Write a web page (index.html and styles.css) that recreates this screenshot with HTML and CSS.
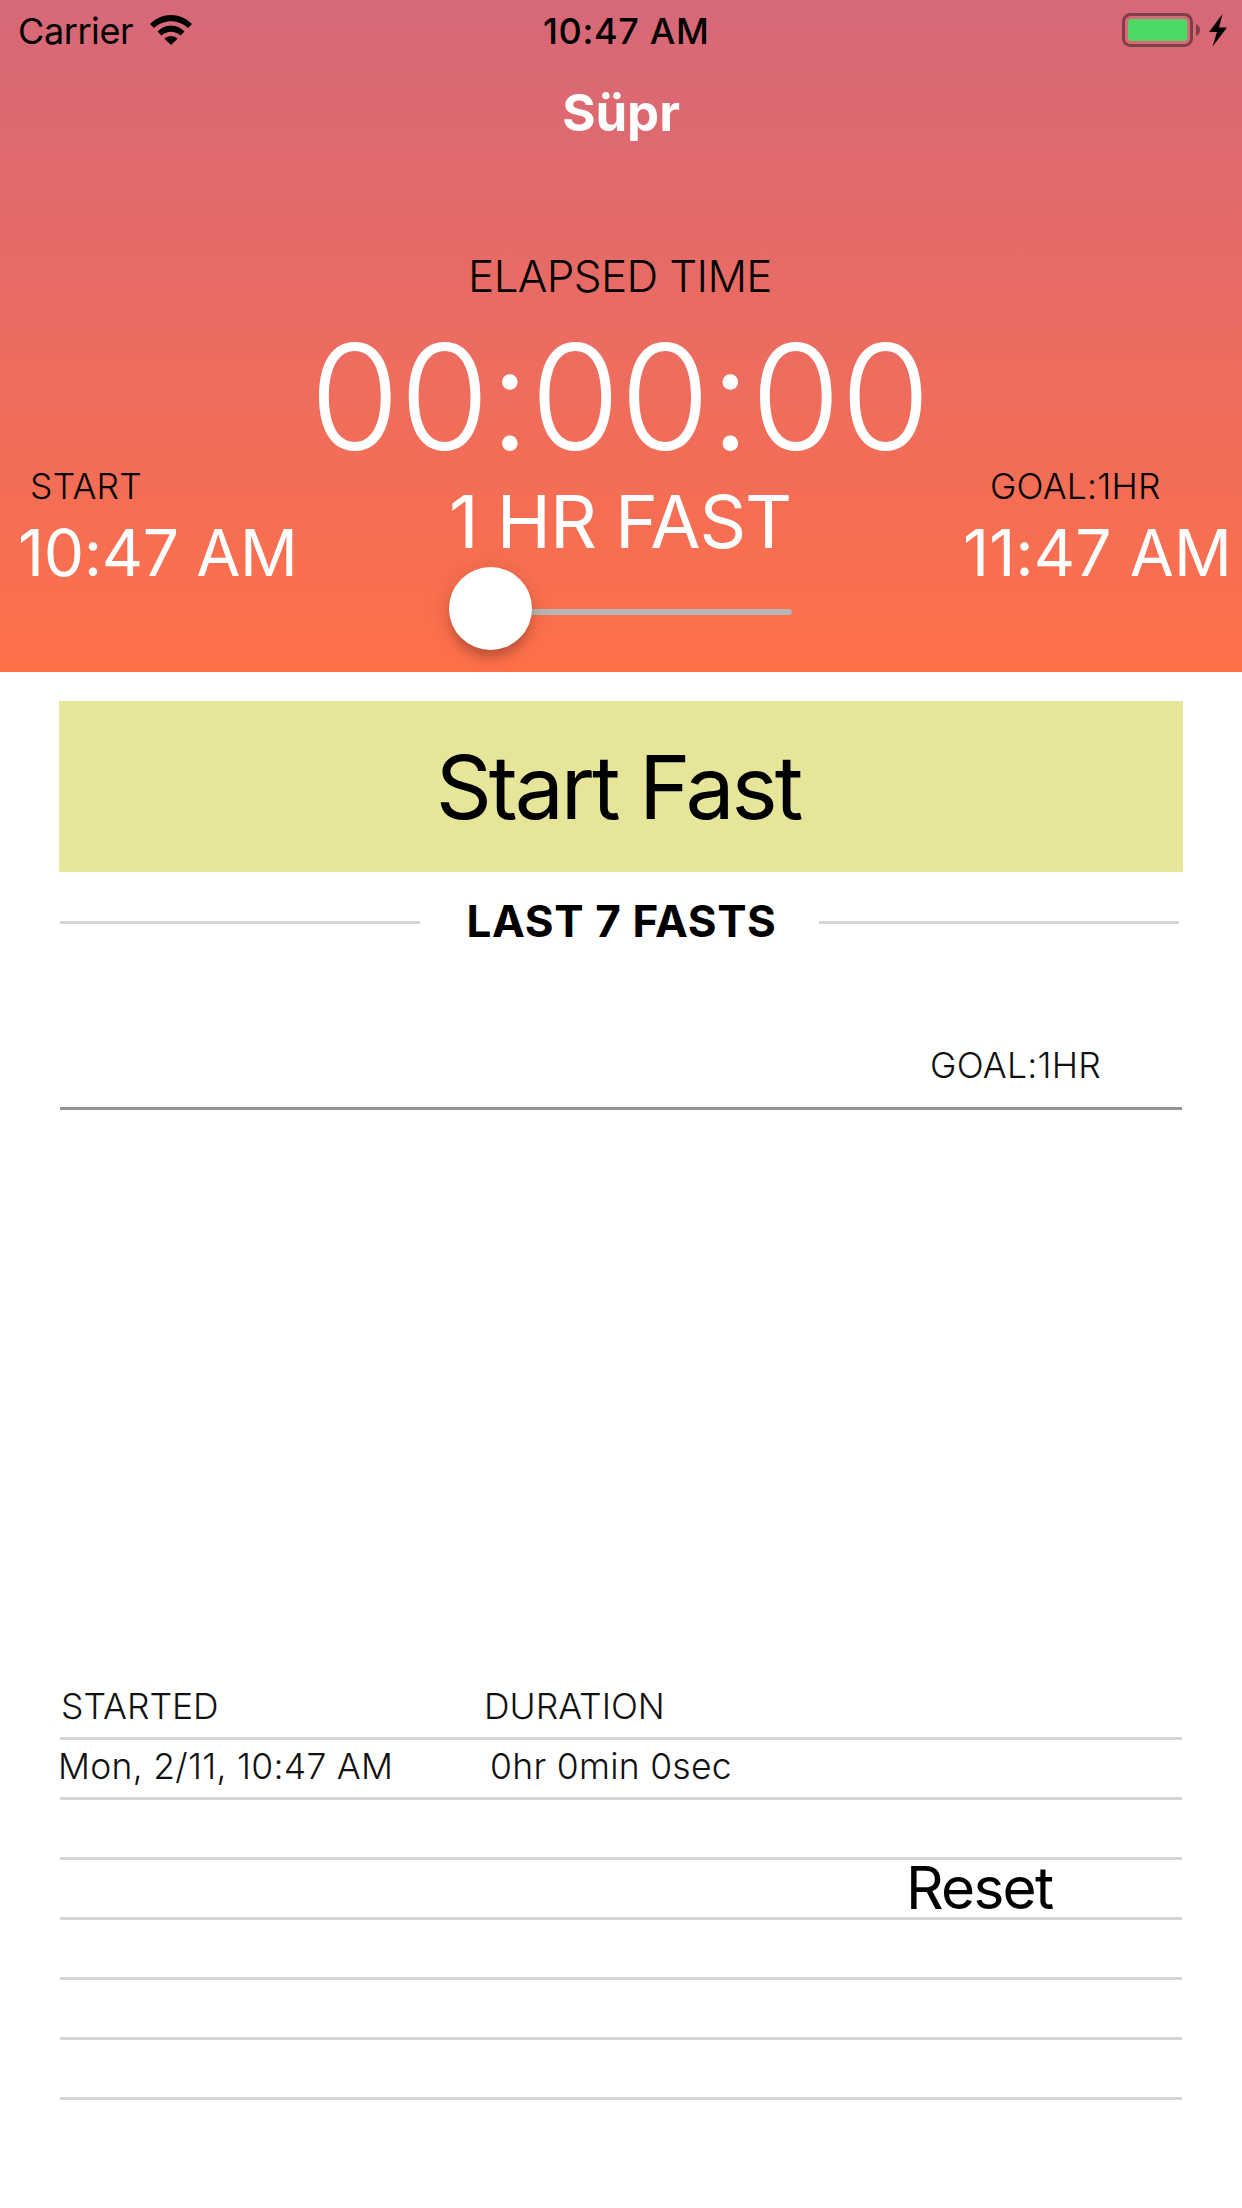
FILE: index.html
```html
<!DOCTYPE html>
<html lang="en">
<head>
<meta charset="utf-8">
<title>Süpr</title>
<link rel="stylesheet" href="styles.css">
</head>
<body>
<header class="header">
  <div class="status">
    <div class="status-left">
      <span class="carrier">Carrier</span>
      <svg class="wifi" width="42" height="30" viewBox="0 0 42 30">
        <path d="M0 9C12-3 30-3 42 9L38 13C28.500 4 13.500 4 4 13Z"/>
        <path d="M7.500 16.500C15 8.500 27 8.500 34.500 16.500L30.500 20.500C25 15.500 17 15.500 11.500 20.500Z"/>
        <path d="M14.500 23.700C18 20 24 20 27.500 23.700L21 30Z"/>
      </svg>
    </div>
    <span class="clock">10:47 AM</span>
    <svg class="battery" width="106" height="34" viewBox="0 0 106 34">
      <rect x="1.500" y="1.500" width="68" height="31" rx="7" fill="none" stroke="#803e49" stroke-width="3"/>
      <rect x="6" y="6" width="59.300" height="22" rx="3.500" fill="#4cd964"/>
      <path d="M74 11C79.300 12.500 79.300 21.500 74 23Z" fill="#803e49"/>
      <path d="M100.500 1L87 19H95L90.500 33.500L105 14.500H97Z"/>
    </svg>
  </div>
  <h1 class="title">Süpr</h1>
  <div class="hero">
    <div class="side side-start">
      <span class="label">START</span>
      <span class="time">10:47 AM</span>
    </div>
    <div class="center">
      <span class="elapsed">ELAPSED TIME</span>
      <span class="timer">00:00:00</span>
      <span class="length">1 HR FAST</span>
      <div class="slider"><div class="track"></div><div class="thumb"></div></div>
    </div>
    <div class="side side-goal">
      <span class="label">GOAL:1HR</span>
      <span class="time time-goal">11:47 AM</span>
    </div>
  </div>
</header>
<main>
  <button class="start-button">Start Fast</button>
  <div class="section-head"><h2>LAST 7 FASTS</h2></div>
  <div class="chart">
    <div class="goal-line">GOAL:1HR</div>
  </div>
  <div class="log">
    <div class="row head"><span>STARTED</span><span>DURATION</span></div>
    <div class="row entry"><span>Mon, 2/11, 10:47 AM</span><span>0hr 0min 0sec</span></div>
    <div class="row"></div>
    <div class="row"><button class="reset">Reset</button></div>
    <div class="row"></div>
    <div class="row"></div>
    <div class="row"></div>
  </div>
</main>
</body>
</html>
```
FILE: styles.css
```css
* { box-sizing: border-box; }
body {
  margin: 0;
  min-height: 2208px;
  background: #fff;
  color: #000;
  font-family: Inter, "Liberation Sans", sans-serif;
  white-space: nowrap;
}
h1, h2 { margin: 0; }
svg { display: block; }
button {
  border: 0;
  margin: 0;
  padding: 0;
  background: none;
  color: #000;
  font-family: inherit;
}

.header {
  height: 672px;
  color: #fff;
  background: linear-gradient(#d66879, #ff7048);
}
.status {
  display: grid;
  grid-template-columns: 543px 1fr auto;
  height: 62px;
  padding-right: 14px;
  color: #000;
  font-size: 36px;
  line-height: 62px;
}
.status-left { display: flex; gap: 17px; padding-left: 18px; }
.carrier { letter-spacing: -0.41px; }
.wifi { margin-top: 15px; }
.clock { font-weight: 500; letter-spacing: 0.66px; }
.battery { margin-top: 13px; }
.title {
  font-size: 51px;
  font-weight: 700;
  line-height: 101px;
  text-align: center;
  letter-spacing: -0.1px;
}

.hero { display: grid; grid-template-columns: 309px 624px 309px; }
.side { display: flex; flex-direction: column; padding-top: 302px; }
.side-start { padding-left: 18px; }
.side-goal { padding-left: 30px; }
.label {
  color: #000;
  font-size: 35.5px;
  font-weight: 300;
  line-height: 44px;
  letter-spacing: 0.2px;
}
.side-start .label { padding-left: 12px; }
.side-goal .label { padding-left: 27px; }
.time { font-size: 64px; line-height: 88px; letter-spacing: -0.37px; }
.time-goal { letter-spacing: 0.11px; }

.center { display: flex; flex-direction: column; padding-top: 80px; text-align: center; }
.elapsed {
  padding-right: 2px;
  color: #000;
  font-size: 44px;
  font-weight: 300;
  line-height: 67px;
  letter-spacing: -0.65px;
}
.timer {
  padding-right: 2px;
  font-size: 146px;
  font-weight: 300;
  line-height: 174px;
  letter-spacing: -0.35px;
}
.length { padding-right: 2px; font-size: 73px; line-height: 76px; letter-spacing: -1.21px; }
.slider { position: relative; width: 343px; height: 83px; margin: 7px 0 0 140px; padding-top: 42px; }
.track { height: 6px; border-radius: 3px; background: #b6b6b6; }
.thumb {
  position: absolute;
  top: 0;
  left: 0;
  width: 83px;
  height: 83px;
  border-radius: 50%;
  background: #fff;
  box-shadow: 0 9px 9px -1px rgba(0, 0, 0, 0.16), 0 4px 24px rgba(0, 0, 0, 0.14);
}

main { padding: 29px 59px 0; }
.start-button {
  display: block;
  width: 1124px;
  height: 171px;
  padding-right: 6px;
  background: #e6e59a;
  font-size: 87.5px;
  letter-spacing: -3.1px;
}
.section-head {
  display: grid;
  grid-template-columns: 360px 399px 360px;
  align-items: center;
  height: 61px;
  margin: 20px 0 0 1px;
}
.section-head::before, .section-head::after { content: ""; height: 3px; background: #d5d5d5; }
h2 {
  padding: 0 0 3px 4px;
  font-size: 44px;
  font-weight: 700;
  line-height: 58px;
  text-align: center;
  letter-spacing: 0.62px;
}
.chart { height: 727px; margin: 0 1px; }
.goal-line {
  padding: 91px 0 19px 870px;
  border-bottom: 3px solid #949494;
  color: #111;
  font-size: 35.5px;
  font-weight: 300;
  line-height: 44px;
  letter-spacing: 0.25px;
}
.log { margin: 0 1px; color: #111; font-size: 35.5px; font-weight: 300; }
.row {
  display: grid;
  grid-template-columns: 424px 422px 1fr;
  height: 60px;
  border-bottom: 3px solid #d5d5d5;
  line-height: 54px;
}
.head > :first-child { padding-left: 1px; }
.entry { letter-spacing: 0.28px; }
.entry > :first-child { margin-left: -2px; }
.entry > :last-child { padding-left: 6px; }
.reset {
  grid-column: 3;
  height: 56px;
  font-size: 58.5px;
  line-height: 56px;
  text-align: left;
  letter-spacing: -1.72px;
}
```
